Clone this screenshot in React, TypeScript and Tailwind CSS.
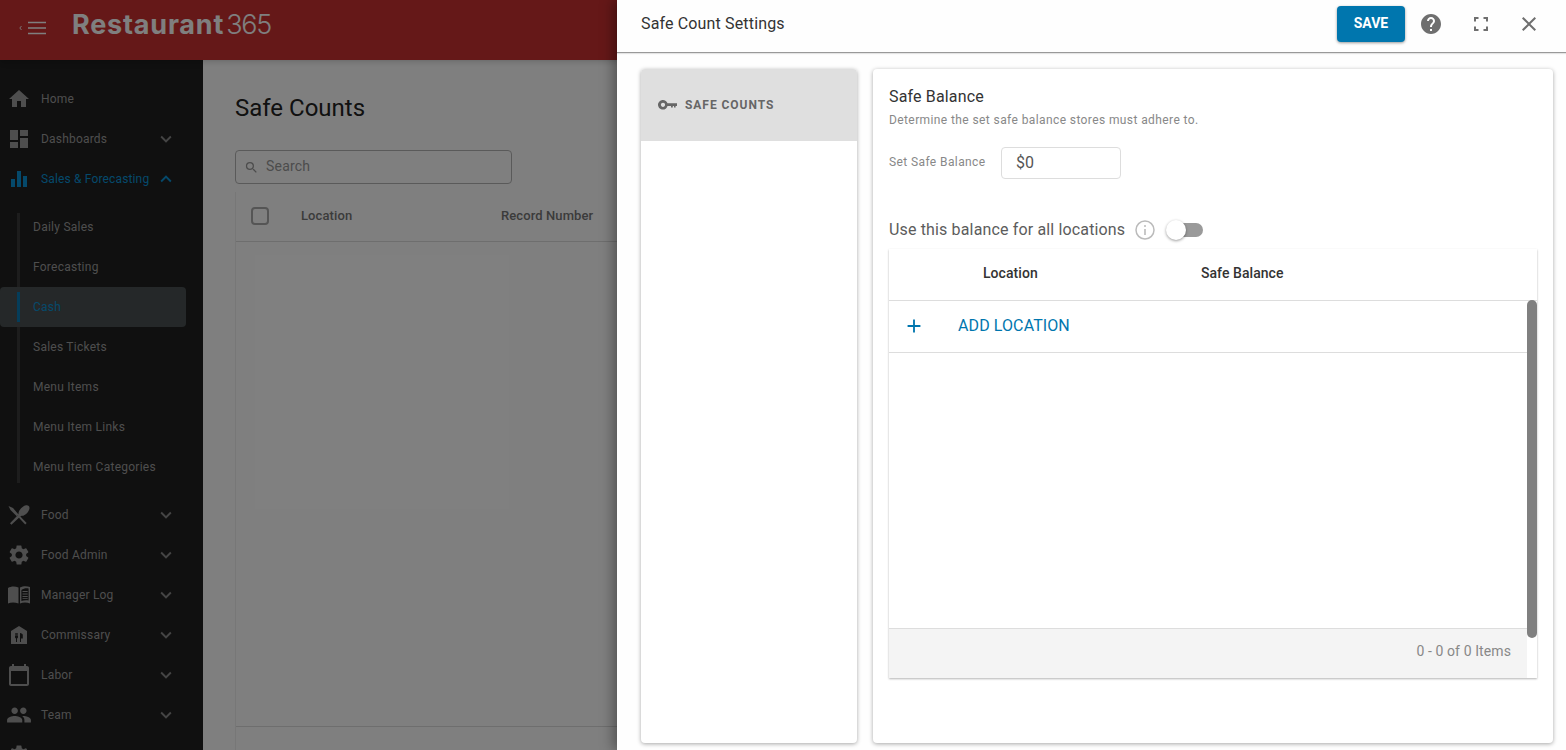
import React from "react";
import {
  MdHome, MdDashboard, MdKeyboardArrowDown, MdKeyboardArrowUp, MdSettings, MdPeople,
  MdHelp, MdClose, MdAdd, MdSearch,
} from "react-icons/md";

const font = { fontFamily: "Roboto, sans-serif" };

function Bars() {
  return (
    <svg width="18" height="18" viewBox="0 0 18 18" fill="currentColor">
      <rect x="1" y="9" width="4" height="8" />
      <rect x="7" y="1" width="4" height="16" />
      <rect x="13" y="6" width="4" height="11" />
    </svg>
  );
}
function Utensils() {
  return (
    <svg width="22" height="20" viewBox="0 0 22 20" fill="currentColor">
      <path d="M0.5 1 L5 3 L10.5 9.5 L8.8 11.2 L2.5 5 Z" />
      <path d="M2 18.3 L3.4 19.7 L12 11.8 L13.6 10.8 C16.5 11.5 21.5 6.5 21.5 3 C21.5 0.8 20 0 18 0.3 C14.5 1 10 6 10.6 8.6 L9.7 10.2 Z" />
      <path d="M10.7 12.4 L12.1 11.2 L18.6 17.9 L17.2 19.4 Z" />
    </svg>
  );
}
function BookIcon() {
  return (
    <svg width="23" height="18" viewBox="0 0 23 18" fill="currentColor">
      <path d="M0 2 C3 0 7 0 10.5 1.5 V17.5 C7 16 3 16 0 17.5 Z" />
      <path fillRule="evenodd" d="M12 1.5 C15 0 19 0 22 1 V17.5 C19 16 15 16 12 17.5 Z M13.4 4 V15 C15.5 14.2 18.5 14 20.6 14.5 V2.6 C18.5 2 15.5 2.4 13.4 4 Z" />
      <path d="M14.5 5 H19.7 V6 H14.5 Z M14.5 7.5 H19.7 V8.5 H14.5 Z M14.5 10 H19.7 V11 H14.5 Z M14.5 12.2 H19.7 V13 H14.5 Z" />
    </svg>
  );
}
function Store() {
  return (
    <svg width="18" height="18" viewBox="0 0 18 18" fill="currentColor">
      <path fillRule="evenodd" d="M9 0 L17 5 V18 H1 V5 Z M5 7 V11 C5 12 5.6 12.3 6 12.5 V16 H7 V12.5 C7.5 12.3 8 12 8 11 V7 H7.4 V10 H6.9 V7 H6.2 V10 H5.6 V7 Z M10 7 V16 H11 V12.5 H12.8 V9 C12.8 8 11.5 7 10 7 Z" />
    </svg>
  );
}
function Calendar() {
  return (
    <svg width="20" height="22" viewBox="0 0 20 22" fill="currentColor">
      <path fillRule="evenodd" d="M3 0 H5 V2 H15 V0 H17 V2 H18 C19.1 2 20 2.9 20 4 V20 C20 21.1 19.1 22 18 22 H2 C0.9 22 0 21.1 0 20 V4 C0 2.9 0.9 2 2 2 H3 Z M2 7 V20 H18 V7 Z" />
    </svg>
  );
}
function KeyIcon() {
  return (
    <svg width="19" height="10" viewBox="0 0 19 10" fill="currentColor">
      <path fillRule="evenodd" d="M5 0 C7 0 8.9 1.4 9.5 3.2 H19 V5.9 H17.6 V7.4 H16 V5.9 H14.8 V7.4 H13 V5.9 H9.5 C8.9 8 7 9.6 5 9.6 C2.3 9.6 0 7.4 0 4.8 C0 2.2 2.3 0 5 0 Z M5 2.7 C3.8 2.7 2.9 3.6 2.9 4.8 C2.9 6 3.8 6.9 5 6.9 C6.2 6.9 7.1 6 7.1 4.8 C7.1 3.6 6.2 2.7 5 2.7 Z" />
    </svg>
  );
}
function Hamburger() {
  return (
    <svg width="28" height="14" viewBox="0 0 28 14" fill="none" stroke="currentColor">
      <path d="M2.5 5 L0.8 7 L2.5 9" strokeWidth="0.9" />
      <path d="M9 1.5 H27 M9 7 H27 M9 12.5 H27" strokeWidth="1.6" />
    </svg>
  );
}
function FullscreenIcon() {
  return (
    <svg width="14" height="14" viewBox="0 0 14 14" fill="none" stroke="currentColor" strokeWidth="2">
      <path d="M1 4.5 V1 H4.5 M9.5 1 H13 V4.5 M13 9.5 V13 H9.5 M4.5 13 H1 V9.5" />
    </svg>
  );
}
function InfoIcon() {
  return (
    <svg width="20" height="20" viewBox="0 0 20 20" fill="none" stroke="currentColor">
      <circle cx="10" cy="10" r="9" strokeWidth="1.5" />
      <path d="M10 9 V15" strokeWidth="1.6" />
      <circle cx="10" cy="6" r="1" fill="currentColor" stroke="none" />
    </svg>
  );
}

const nav = [
  { label: "Home", icon: <MdHome size={24} /> },
  { label: "Dashboards", icon: <MdDashboard size={24} />, arrow: true },
];
const nav2 = [
  { label: "Food", icon: <Utensils />, arrow: true },
  { label: "Food Admin", icon: <MdSettings size={24} />, arrow: true },
  { label: "Manager Log", icon: <BookIcon />, arrow: true },
  { label: "Commissary", icon: <Store />, arrow: true },
  { label: "Labor", icon: <Calendar />, arrow: true },
  { label: "Team", icon: <MdPeople size={26} />, arrow: true },
  { label: "Settings", icon: <MdSettings size={24} />, arrow: true },
];
const subs = ["Daily Sales", "Forecasting", "Cash", "Sales Tickets", "Menu Items", "Menu Item Links", "Menu Item Categories"];

function NavRow({ label, icon, arrow, active }: { label: string; icon: React.ReactNode; arrow?: boolean; active?: boolean }) {
  return (
    <div className={`flex h-10 shrink-0 items-center ${active ? "text-[#0a93d6]" : "text-[#9d9d9d]"}`}>
      <div className="flex w-[38px] shrink-0 justify-center">{icon}</div>
      <span className={`ml-[3px] w-[114px] shrink-0 text-xs whitespace-nowrap ${active ? "tracking-[0.15px]" : "tracking-[0.2px]"}`}>{label}</span>
      {arrow && (
        <span className={active ? "" : "text-[#8a8a8a]"}>
          {active ? <MdKeyboardArrowUp size={22} /> : <MdKeyboardArrowDown size={22} />}
        </span>
      )}
    </div>
  );
}

export default function App() {
  return (
    <div className="relative flex h-[750px] w-full flex-col overflow-hidden bg-white" style={font}>
      <header className="z-10 flex h-[60px] shrink-0 items-start bg-[#ca3030] pl-[19px] text-[#ffffff] shadow-md">
        <div className="mt-[21px]"><Hamburger /></div>
        <div className="mt-[11px] ml-[25px] flex items-baseline text-[27px] leading-[28px] whitespace-nowrap text-[#ffffff]" style={{ fontFamily: "Inter, sans-serif" }}>
          <span className="font-bold tracking-[0.8px]">Restaurant</span>
          <span className="ml-[2px] font-light tracking-[-1.2px]">365</span>
        </div>
      </header>

      <div className="flex min-h-0 flex-1">
        <aside className="w-[203px] shrink-0 overflow-hidden bg-[#202020] pt-[19px]">
          {nav.map((n) => <NavRow key={n.label} {...n} />)}
          <NavRow label="Sales & Forecasting" icon={<Bars />} arrow active />
          <div className="relative my-2">
            <div className="absolute top-[6px] bottom-[4px] left-[17px] w-[3px] bg-[#3a3a3a]" />
            {subs.map((s) => (
              <div
                key={s}
                className={`relative flex h-10 w-[186px] items-center pl-[33px] text-xs tracking-[0.25px] ${s === "Cash" ? "rounded bg-[#4a5152] text-[#0a93d6]" : "text-[#9d9d9d]"}`}
              >
                {s === "Cash" && <div className="absolute top-[5px] bottom-[5px] left-[17px] w-[3px] bg-[#0a7ab5]" />}
                {s}
              </div>
            ))}
          </div>
          {nav2.map((n) => <NavRow key={n.label} {...n} />)}
        </aside>

        <main className="flex min-w-0 flex-1 flex-col bg-white pt-[30px] pl-[32px] text-[#222]">
          <h1 className="text-2xl leading-9">Safe Counts</h1>
          <div className="mt-[24px] flex h-[34px] w-[277px] shrink-0 items-center rounded border border-[#b5b5b5] pl-2 text-[#999]">
            <MdSearch size={15} />
            <span className="mt-[-2px] ml-[7px] text-sm tracking-[0.2px]">Search</span>
          </div>
          <div className="mt-2 flex min-h-0 flex-1 flex-col border-l border-[#eee]">
            <div className="flex h-[50px] shrink-0 items-center border-b border-[#ddd] pb-[2px] pl-[15px] text-[13px] font-medium tracking-[0.1px] text-[#777]">
              <div className="h-[18px] w-[18px] rounded-sm border-2 border-[#aaa]" />
              <span className="ml-[32px] w-[200px]">Location</span>
              <span className="whitespace-nowrap">Record Number</span>
            </div>
            <div className="flex-1" />
            <div className="h-6 shrink-0 border-t border-[#ddd]" />
          </div>
        </main>
      </div>

      <div className="absolute inset-0 z-20 bg-black/50" />

      <div className="absolute inset-y-0 right-0 z-30 flex w-[949px] flex-col bg-[#fefefe] text-[#333] shadow-[-4px_0_12px_rgba(0,0,0,0.35)]">
        <div className="flex h-[53px] shrink-0 items-center border-b border-[#999] pb-[4px] pl-[24px] shadow-[0_1px_1px_rgba(0,0,0,0.1)]">
          <span className="text-base tracking-[0.15px] text-[#333]">Safe Count Settings</span>
          <div className="ml-auto flex items-center">
            <button className="h-9 w-[68px] rounded bg-[#0076ae] pb-[2px] text-sm font-bold text-white shadow-[0_1px_3px_rgba(0,0,0,0.4)]">SAVE</button>
            <span className="ml-[14px] text-[#6f6f6f]"><MdHelp size={24} /></span>
            <span className="ml-[31px] text-[#6f6f6f]"><FullscreenIcon /></span>
            <span className="mr-[25px] ml-[29px] text-[#6f6f6f]"><MdClose size={24} /></span>
          </div>
        </div>

        <div className="flex min-h-0 flex-1 gap-4 pt-4 pr-[13px] pb-[7px] pl-[24px]">
          <div className="w-[216px] shrink-0 overflow-hidden rounded bg-white shadow-[0_1px_4px_rgba(0,0,0,0.35)]">
            <div className="flex h-[72px] items-center bg-[#dfdfdf] pl-[17px] text-[#666]">
              <KeyIcon />
              <span className="ml-[8px] text-xs font-bold tracking-[0.95px]">SAFE COUNTS</span>
            </div>
          </div>

          <div className="flex-1 rounded bg-white pt-[18px] pl-4 shadow-[0_1px_4px_rgba(0,0,0,0.35)]">
            <h2 className="text-base leading-5 tracking-[0.15px] text-[#333]">Safe Balance</h2>
            <p className="mt-[4px] text-xs leading-[18px] tracking-[0.4px] text-[#888]">Determine the set safe balance stores must adhere to.</p>
            <div className="mt-[18px] flex items-center">
              <span className="mt-[-3px] w-[112px] text-xs tracking-[0.4px] text-[#888]">Set Safe Balance</span>
              <div className="flex h-8 w-[120px] items-center rounded border border-[#ddd] pb-[1px] pl-[14px] text-base text-[#555]">$0</div>
            </div>
            <div className="mt-[41px] flex h-5 items-center">
              <span className="text-base tracking-[0.15px] text-[#5c5c5c]">Use this balance for all locations</span>
              <span className="ml-[10px] text-[#bbb]"><InfoIcon /></span>
              <div className="relative ml-[11px] h-[14px] w-[37px]">
                <div className="ml-[2px] h-[14px] w-[35px] rounded-full bg-[#9a9a9a]" />
                <div className="absolute top-[-3px] left-0 h-5 w-5 rounded-full bg-white shadow-[0_1px_3px_rgba(0,0,0,0.4)]" />
              </div>
            </div>

            <div className="relative mt-[9px] flex h-[429px] w-[648px] flex-col shadow-[0_1px_2px_rgba(0,0,0,0.3)]">
              <div className="flex h-[52px] shrink-0 items-center border-b border-[#ddd] pb-[4px] text-sm font-medium tracking-[0.05px] text-[#333]">
                <span className="ml-[94px] w-[218px]">Location</span>
                <span>Safe Balance</span>
              </div>
              <div className="flex h-[52px] shrink-0 items-center border-b border-[#ddd] pb-[2px] text-[#0076ae]">
                <span className="ml-[14px]"><MdAdd size={22} /></span>
                <span className="ml-[33px] text-base tracking-[0.1px]">ADD LOCATION</span>
              </div>
              <div className="flex-1" />
              <div className="mr-[10px] flex h-[50px] shrink-0 items-center justify-end border-t border-[#ddd] bg-[#f4f4f4] pr-[16px] pb-[5px] text-sm tracking-[0.1px] text-[#888]">
                0 - 0 of 0 Items
              </div>
              <div className="absolute top-[51px] right-0 h-[338px] w-[10px] rounded-md bg-[#808080]" />
            </div>
          </div>
        </div>
      </div>
    </div>
  );
}
